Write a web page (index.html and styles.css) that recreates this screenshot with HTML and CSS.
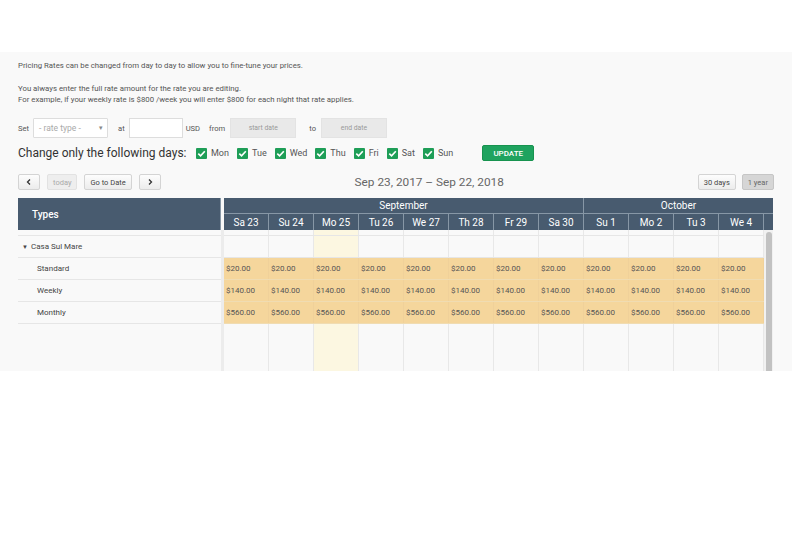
FILE: index.html
```html
<!DOCTYPE html>
<html>
<head>
<meta charset="utf-8">
<link rel="stylesheet" href="styles.css">
</head>
<body>
<div class="page">
  <p class="intro first">Pricing Rates can be changed from day to day to allow you to fine-tune your prices.</p>
  <p class="intro second">You always enter the full rate amount for the rate you are editing.<br>For example, if your weekly rate is $800 /week you will enter $800 for each night that rate applies.</p>

  <div class="set-row">
    <span class="lbl">Set</span>
    <div class="select"><span>- rate type -</span><span class="caret">▾</span></div>
    <span class="lbl at">at</span>
    <div class="amount"></div>
    <span class="lbl usd">USD</span>
    <span class="lbl from">from</span>
    <div class="date">start date</div>
    <span class="lbl to">to</span>
    <div class="date">end date</div>
  </div>

  <div class="days-row">
    <span class="days-title">Change only the following days:</span>
    <div class="days">
      <label class="day"><span class="cb"><svg viewBox="0 0 12 12"><path d="M2.5 6.2 L5 8.6 L9.6 3.6" fill="none" stroke="#fff" stroke-width="1.8"/></svg></span>Mon</label>
      <label class="day"><span class="cb"><svg viewBox="0 0 12 12"><path d="M2.5 6.2 L5 8.6 L9.6 3.6" fill="none" stroke="#fff" stroke-width="1.8"/></svg></span>Tue</label>
      <label class="day"><span class="cb"><svg viewBox="0 0 12 12"><path d="M2.5 6.2 L5 8.6 L9.6 3.6" fill="none" stroke="#fff" stroke-width="1.8"/></svg></span>Wed</label>
      <label class="day"><span class="cb"><svg viewBox="0 0 12 12"><path d="M2.5 6.2 L5 8.6 L9.6 3.6" fill="none" stroke="#fff" stroke-width="1.8"/></svg></span>Thu</label>
      <label class="day"><span class="cb"><svg viewBox="0 0 12 12"><path d="M2.5 6.2 L5 8.6 L9.6 3.6" fill="none" stroke="#fff" stroke-width="1.8"/></svg></span>Fri</label>
      <label class="day"><span class="cb"><svg viewBox="0 0 12 12"><path d="M2.5 6.2 L5 8.6 L9.6 3.6" fill="none" stroke="#fff" stroke-width="1.8"/></svg></span>Sat</label>
      <label class="day"><span class="cb"><svg viewBox="0 0 12 12"><path d="M2.5 6.2 L5 8.6 L9.6 3.6" fill="none" stroke="#fff" stroke-width="1.8"/></svg></span>Sun</label>
    </div>
    <button class="update">UPDATE</button>
  </div>

  <div class="toolbar">
    <div class="nav">
      <button class="btn arrow"><svg viewBox="0 0 10 10"><path d="M6 2.5 L3.5 5 L6 7.5" fill="none" stroke="#333" stroke-width="1.3"/></svg></button>
      <button class="btn disabled">today</button>
      <button class="btn">Go to Date</button>
      <button class="btn arrow"><svg viewBox="0 0 10 10"><path d="M4 2.5 L6.5 5 L4 7.5" fill="none" stroke="#333" stroke-width="1.3"/></svg></button>
    </div>
    <div class="range">Sep 23, 2017 – Sep 22, 2018</div>
    <div class="views">
      <button class="btn">30 days</button>
      <button class="btn active">1 year</button>
    </div>
  </div>

  <div class="sched">
    <div class="left">
      <div class="types-head">Types</div>
      <div class="left-body">
        <div class="strip"></div>
        <div class="lrow group"><span class="tri">▼</span>Casa Sul Mare</div>
        <div class="lrow sub">Standard</div>
        <div class="lrow sub">Weekly</div>
        <div class="lrow sub">Monthly</div>
      </div>
    </div>
    <div class="gutter"></div>
    <div class="right">
      <div class="months">
        <div class="month sep">September</div>
        <div class="month oct">October</div>
      </div>
      <div class="dayheads">
        <div class="dh">Sa 23</div><div class="dh">Su 24</div><div class="dh">Mo 25</div><div class="dh">Tu 26</div><div class="dh">We 27</div><div class="dh">Th 28</div><div class="dh">Fr 29</div><div class="dh">Sa 30</div><div class="dh">Su 1</div><div class="dh">Mo 2</div><div class="dh">Tu 3</div><div class="dh">We 4</div><div class="dh stub"></div>
      </div>
      <div class="right-body">
        <div class="grid">
          <div class="strip cols"><i></i><i></i><i class="today"></i><i></i><i></i><i></i><i></i><i></i><i></i><i></i><i></i><i></i></div>
          <div class="row cols"><i></i><i></i><i class="today"></i><i></i><i></i><i></i><i></i><i></i><i></i><i></i><i></i><i></i></div>
          <div class="row cols rate"><i>$20.00</i><i>$20.00</i><i>$20.00</i><i>$20.00</i><i>$20.00</i><i>$20.00</i><i>$20.00</i><i>$20.00</i><i>$20.00</i><i>$20.00</i><i>$20.00</i><i>$20.00</i></div>
          <div class="row cols rate"><i>$140.00</i><i>$140.00</i><i>$140.00</i><i>$140.00</i><i>$140.00</i><i>$140.00</i><i>$140.00</i><i>$140.00</i><i>$140.00</i><i>$140.00</i><i>$140.00</i><i>$140.00</i></div>
          <div class="row cols rate"><i>$560.00</i><i>$560.00</i><i>$560.00</i><i>$560.00</i><i>$560.00</i><i>$560.00</i><i>$560.00</i><i>$560.00</i><i>$560.00</i><i>$560.00</i><i>$560.00</i><i>$560.00</i></div>
          <div class="fill cols"><i></i><i></i><i class="today"></i><i></i><i></i><i></i><i></i><i></i><i></i><i></i><i></i><i></i></div>
        </div>
        <div class="scrollbar"><div class="thumb"></div></div>
      </div>
    </div>
  </div>
</div>
</body>
</html>
```
FILE: styles.css
```css
* { box-sizing: border-box; }
html, body { margin: 0; padding: 0; background: #fff; }
body { font-family: Roboto, "Liberation Sans", sans-serif; color: #555; }

.page {
  margin-top: 52px;
  width: 792px;
  height: 319px;
  background: #f9f9f9;
  padding: 8px 18px 0 18px;
  overflow: hidden;
}

.intro { margin: 0; font-size: 7.8px; line-height: 11px; color: #555; }
.intro.second { margin-top: 12px; }

.set-row {
  display: flex;
  align-items: center;
  height: 20px;
  margin-top: 13px;
  font-size: 7.6px;
}
.lbl { color: #555; }
.select {
  width: 75px; height: 20px; margin-left: 4px;
  background: #fff; border: 1px solid #ddd; border-radius: 1px;
  display: flex; align-items: center; justify-content: space-between;
  padding: 0 4px 0 5px; color: #aaa; font-size: 8.5px;
}
.select .caret { font-size: 7px; color: #888; }
.at { margin-left: 10px; }
.amount { width: 54px; height: 20px; margin-left: 4px; background: #fff; border: 1px solid #ddd; }
.usd { margin-left: 3px; }
.from { margin-left: 9px; }
.date {
  width: 66px; height: 20px; margin-left: 5px;
  background: #e9e9e9; border: 1px solid #e3e3e3;
  display: flex; align-items: center; justify-content: center;
  color: #999; font-size: 6.8px;
}
.to { margin-left: 13px; margin-right: 5px; }
.to + .date { margin-left: 0; }

.days-row { display: flex; align-items: center; height: 18px; margin-top: 6px; }
.days-title { font-size: 12px; color: #333; width: 178px; }
.days { display: flex; align-items: center; }
.day { display: flex; align-items: center; font-size: 9px; color: #555; margin-right: 8px; }
.day .cb { width: 11px; height: 11px; background: #1e9e57; border-radius: 1px; margin-right: 4px; display: flex; }
.day .cb svg { width: 11px; height: 11px; }
.update {
  margin-left: 21px;
  width: 52px; height: 16px;
  background: #1fa35f; border: 1px solid #17934f; border-radius: 2px;
  color: #fff; font-family: Roboto, sans-serif; font-weight: 500; font-size: 8px;
  padding: 0;
}

.toolbar { display: flex; align-items: center; justify-content: space-between; height: 16px; margin-top: 12px; }
.nav, .views { display: flex; gap: 7px; }
.views { gap: 6px; }
.btn {
  height: 16px; padding: 0 5px;
  border: 1px solid #d4d4d4; border-radius: 2px;
  background: linear-gradient(#fdfdfd, #ececec);
  font-family: Roboto, sans-serif; font-size: 7.5px; color: #444;
  display: flex; align-items: center; justify-content: center;
}
.btn.arrow { width: 22px; padding: 0; }
.btn.arrow svg { width: 10px; height: 10px; }
.btn.disabled { background: #eee; color: #aaa; border-color: #e2e2e2; }
.btn.active { background: #d6d6d6; color: #666; border-color: #c6c6c6; }
.range { font-size: 11.8px; color: #666; }

.sched { display: flex; margin-top: 8px; height: 180px; }
.left { width: 203px; display: flex; flex-direction: column; }
.gutter { width: 3px; background: #ececec; margin-top: 32px; }
.right { width: 549px; display: flex; flex-direction: column; }

.types-head {
  height: 32px; background: #485b6f; color: #fff;
  font-size: 10px; font-weight: 500;
  display: flex; align-items: center; padding-left: 14px;
  border-right: 1px solid #8797a6;
}
.left-body { flex: 1; background: #f9f9f9; }
.strip { height: 6px; border-bottom: 1px solid #e6e6e6; }
.lrow { height: 22px; border-bottom: 1px solid #e6e6e6; font-size: 8px; color: #444; display: flex; align-items: center; }
.lrow.group { padding-left: 4px; }
.lrow.group .tri { font-size: 6px; margin-right: 3px; }
.lrow.sub { padding-left: 19px; }

.months { display: flex; height: 16px; background: #485b6f; border-bottom: 1px solid #8797a6; }
.month { color: #fff; font-size: 10px; display: flex; align-items: center; justify-content: center; }
.month.sep { width: 360px; border-right: 1px solid #8797a6; }
.month.oct { flex: 1; }
.dayheads { display: flex; height: 16px; background: #485b6f; }
.dh { width: 45px; color: #fff; font-size: 10px; display: flex; align-items: center; justify-content: center; border-right: 1px solid #8797a6; }
.dh.stub { width: 9px; border-right: 0; }

.right-body { flex: 1; display: flex; }
.grid { width: 540px; display: flex; flex-direction: column; }
.cols { display: flex; }
.cols i { font-style: normal; width: 45px; border-right: 1px solid #e8e8e8; }
.cols i.today { background: #fcf7e1; }
.grid .strip { height: 6px; }
.row { height: 22px; border-bottom: 1px solid #e6e6e6; }
.row.rate { background: #f5d69c; border-bottom-color: #f0dcb2; }
.row.rate i { border-right-color: #f0d19a; font-size: 8px; color: #555; display: flex; align-items: center; padding-left: 2px; }
.fill { flex: 1; }
.scrollbar { width: 9px; background: #f1f1f1; padding: 2px 1px 0 2px; }
.thumb { height: 100%; background: #c2c2c2; border-radius: 3px; }
```
